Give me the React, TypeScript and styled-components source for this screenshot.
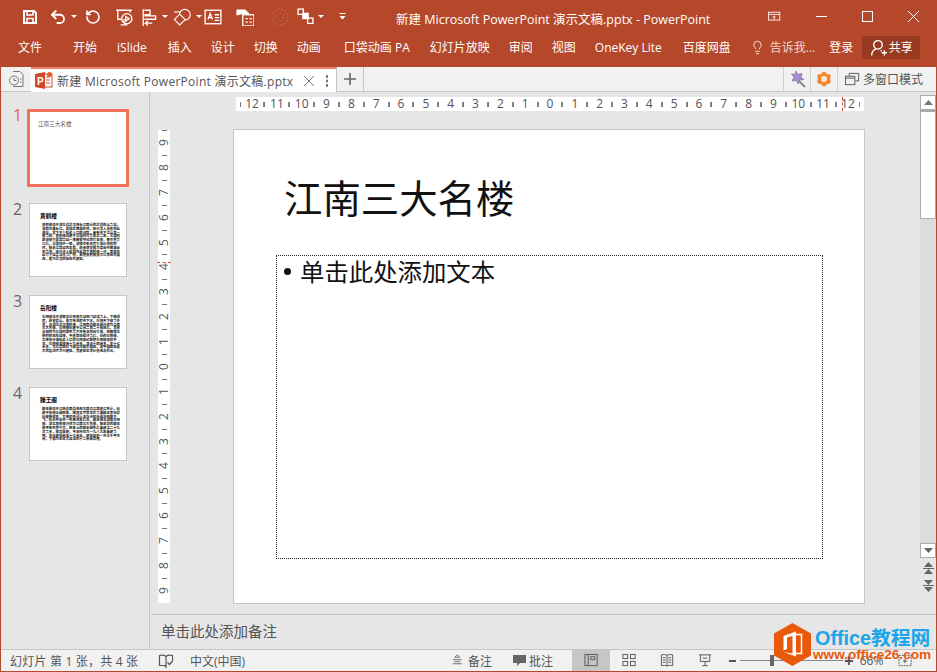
import React from 'react'
import styled, { createGlobalStyle } from 'styled-components'
import { Lightbulb, Undo2, RotateCcw } from 'lucide-react'

const RED = '#b5472a'
const UI_FONT = '"Open Sans", "Noto Sans CJK SC", sans-serif'

const GlobalStyle = createGlobalStyle`
  html, body { margin: 0; padding: 0; background: #e6e6e6; overflow: hidden; }
  * { box-sizing: border-box; }
`

const Win = styled.div`
  position: relative;
  width: 937px;
  height: 672px;
  display: flex;
  flex-direction: column;
  border: 1px solid ${RED};
  border-top: 0;
  background: #e6e6e6;
  font-family: ${UI_FONT};
  font-size: 12px;
  color: #555;
  overflow: hidden;
`
const TitleBar = styled.div`
  height: 33px;
  flex-shrink: 0;
  display: flex;
  align-items: center;
  background: ${RED};
  color: #fff;
`
const QuickBar = styled.div`
  width: 395px;
  flex-shrink: 0;
  display: flex;
  align-items: center;
  padding-left: 19px;
`
const QuickIcon = styled.span<{ $l?: number }>`
  width: 20px;
  height: 33px;
  margin-left: ${p => p.$l ?? 0}px;
  flex-shrink: 0;
  display: flex;
  align-items: center;
  justify-content: center;
`
const Caret = styled.span<{ $l: number }>`
  width: 6px;
  height: 0;
  margin-left: ${p => p.$l}px;
  border: 3px solid transparent;
  border-top: 3px solid #fff;
  border-bottom: 0;
  flex-shrink: 0;
`
const Title = styled.div`
  font-size: 12.5px;
  white-space: nowrap;
  padding-top: 4px;
`
const WinControls = styled.div`
  margin-left: auto;
  display: flex;
`
const WinButton = styled.span`
  width: 46px;
  height: 33px;
  display: flex;
  align-items: center;
  justify-content: center;
`
const Ribbon = styled.div`
  height: 34px;
  flex-shrink: 0;
  display: flex;
  align-items: center;
  gap: 19px;
  padding: 0 16px 6px 17px;
  background: ${RED};
  color: #fff;
  white-space: nowrap;
`
const RibbonTab = styled.span<{ $l?: number }>`
  margin-left: ${p => p.$l ?? 0}px;
`
const TellMe = styled.span`
  display: flex;
  align-items: center;
  gap: 5px;
  color: #f2d9d1;
`
const ShareButton = styled.span`
  margin-left: -10px;
  width: 58px;
  height: 23px;
  display: flex;
  align-items: center;
  justify-content: center;
  gap: 2px;
  background: #983a20;
`
const TabStrip = styled.div`
  height: 25px;
  flex-shrink: 0;
  display: flex;
  align-items: stretch;
  background: #f1f1f1;
  border-bottom: 1px solid #c6c6c6;
`
const HistoryBox = styled.span`
  width: 30px;
  display: flex;
  align-items: center;
  justify-content: center;
`
const DocTab = styled.div`
  width: 306px;
  height: 25px;
  display: flex;
  align-items: center;
  padding-left: 4px;
  background: #fff;
  border-top: 2px solid #f0826b;
  border-right: 1px solid #c6c6c6;
  white-space: nowrap;
  color: #555;
`
const DocName = styled.span`
  margin-left: 4px;
  width: 241px;
  font-size: 12px;
  letter-spacing: .28px;
`
const CloseGlyph = styled.span`
  width: 22px;
  display: flex;
  justify-content: center;
`
const Dots = styled.span`
  width: 4px;
  height: 12px;
  margin-left: 5px;
  background: radial-gradient(circle, #666 1px, transparent 1.2px) center / 4px 4.5px repeat-y;
`
const NewTab = styled.span`
  width: 27px;
  display: flex;
  align-items: center;
  justify-content: center;
  border-right: 1px solid #c6c6c6;
`
const StripRight = styled.div`
  margin-left: auto;
  display: flex;
`
const StripCell = styled.span<{ $w: number }>`
  width: ${p => p.$w}px;
  display: flex;
  align-items: center;
  justify-content: center;
  border-left: 1px solid #d0d0d0;
  white-space: nowrap;
`
const WindowModeCell = styled(StripCell)`
  justify-content: flex-start;
  gap: 3px;
  padding-left: 7px;
`
const Body = styled.div`
  flex: 1;
  min-height: 0;
  display: flex;
`
const ThumbPanel = styled.aside`
  width: 149px;
  flex-shrink: 0;
  display: flex;
  flex-direction: column;
  gap: 18px;
  padding: 17px 0 0 12px;
  border-right: 1px solid #c6c6c6;
`
const ThumbRow = styled.div<{ $active?: boolean }>`
  display: flex;
  gap: ${p => (p.$active ? 6 : 8)}px;
  height: ${p => (p.$active ? 78 : 74)}px;
  margin-bottom: ${p => (p.$active ? -2 : 0)}px;
`
const ThumbNum = styled.span<{ $active?: boolean }>`
  width: 8px;
  font-size: 16px;
  line-height: 12px;
  color: ${p => (p.$active ? '#e0664d' : '#666')};
`
const Thumb = styled.div<{ $active?: boolean }>`
  width: ${p => (p.$active ? 102 : 98)}px;
  height: 100%;
  padding: ${p => (p.$active ? '8px 0 0 8px' : '8px 8px 0 10px')};
  background: #fff;
  border: ${p => (p.$active ? '3px solid #f2735a' : '1px solid #c6c6c6')};
  overflow: hidden;
`
const ThumbCover = styled.div`
  font-size: 5.6px;
  line-height: 8px;
  color: #555;
`
const ThumbTitle = styled.div`
  font-size: 5.7px;
  line-height: 8px;
  font-weight: 700;
  color: #000;
`
const ThumbText = styled.p`
  margin: 3px 0 0;
  padding-left: 2px;
  width: 80px;
  font-size: 3.4px;
  line-height: 3.8px;
  font-weight: 700;
  color: #111;
`
const Workspace = styled.main`
  flex: 1;
  min-width: 0;
  display: flex;
  flex-direction: column;
`
const EditRow = styled.div`
  flex: 1;
  min-height: 0;
  display: flex;
`
const Canvas = styled.div`
  width: 770px;
  flex-shrink: 0;
`
const HRuler = styled.div`
  position: relative;
  width: 628px;
  height: 14px;
  margin: 5px 0 0 86px;
  display: flex;
  justify-content: center;
  background: #fff;
`
const HCell = styled.span`
  width: 24.83px;
  flex-shrink: 0;
  text-align: center;
  font-size: 12px;
  line-height: 14px;
  color: #555;
  background:
    linear-gradient(#777, #777) left center / 1px 5px no-repeat,
    linear-gradient(#888, #888) right center / 1px 5px no-repeat;
`
const HMark = styled.i`
  position: absolute;
  left: 606px;
  top: 0;
  height: 14px;
  border-left: 1px dashed #d9503a;
`
const SlideRow = styled.div`
  display: flex;
  align-items: flex-start;
  gap: 63px;
  margin: 19px 0 0 8px;
`
const VRuler = styled.div`
  position: relative;
  width: 12px;
  height: 473px;
  display: flex;
  flex-direction: column;
  background: #fff;
`
const VCell = styled.span`
  height: 24.89px;
  flex-shrink: 0;
  display: flex;
  align-items: center;
  justify-content: center;
  font-size: 12px;
  color: #555;
  background: linear-gradient(#777, #777) center top / 5px 1px no-repeat;
`
const VDigit = styled.span`
  writing-mode: vertical-rl;
  transform: rotate(180deg);
  line-height: 12px;
`
const VMark = styled.i`
  position: absolute;
  left: -1px;
  top: 132px;
  width: 14px;
  border-top: 1px dashed #d9503a;
`
const Slide = styled.section`
  width: 632px;
  height: 475px;
  margin-top: -1px;
  display: flex;
  flex-direction: column;
  background: #fff;
  border: 1px solid #c6c6c6;
`
const SlideTitle = styled.h1`
  margin: 43px 0 0 50px;
  font-size: 38.4px;
  font-weight: 400;
  line-height: 50px;
  color: #111;
`
const Placeholder = styled.div`
  margin: 32px 0 0 42px;
  width: 547px;
  height: 304px;
  display: flex;
  align-items: flex-start;
  gap: 9px;
  padding: 0 0 0 7px;
  border: 1px dotted #222;
  font-size: 24.4px;
  line-height: 31px;
  color: #111;
`
const Bullet = styled.span`
  width: 7px;
  height: 7px;
  margin-top: 12px;
  border-radius: 50%;
  background: #111;
  flex-shrink: 0;
`
const ScrollBar = styled.div`
  width: 16px;
  flex-shrink: 0;
  display: flex;
  flex-direction: column;
  margin-top: 3px;
`
const ScrollBtn = styled.span`
  height: 15px;
  flex-shrink: 0;
  display: flex;
  align-items: center;
  justify-content: center;
  background: #fff;
  border: 1px solid #ababab;
`
const ScrollThumb = styled.span`
  height: 109px;
  flex-shrink: 0;
  background: #fff;
  border: 1px solid #ababab;
  border-top-width: 2px;
`
const ScrollTrack = styled.span`
  flex: 1;
  background: #dcdcdc;
`
const PageBtn = styled.span`
  height: 18px;
  flex-shrink: 0;
  display: flex;
  align-items: center;
  justify-content: center;
`
const ScrollFoot = styled.div`
  height: 56px;
  padding-top: 1px;
  flex-shrink: 0;
`
const Notes = styled.div`
  height: 35px;
  flex-shrink: 0;
  margin-left: 2px;
  padding: 0 0 3px 9px;
  display: flex;
  align-items: center;
  border-top: 1px solid #c6c6c6;
  font-size: 14.5px;
  color: #555;
`
const StatusBar = styled.footer`
  height: 22px;
  flex-shrink: 0;
  display: flex;
  align-items: center;
  padding-left: 9px;
  background: #f1f1f1;
  border-top: 1px solid #c6c6c6;
  color: #555;
  white-space: nowrap;
`
const StatusText = styled.span<{ $w: number }>`
  width: ${p => p.$w}px;
  flex-shrink: 0;
  display: flex;
  align-items: center;
  gap: 3px;
`
const SlideCount = styled(StatusText)`
  letter-spacing: .2px;
`
const ViewBtn = styled.span<{ $active?: boolean }>`
  width: 38px;
  height: 21px;
  flex-shrink: 0;
  display: flex;
  align-items: center;
  justify-content: center;
  background: ${p => (p.$active ? '#c6c6c6' : 'transparent')};
`
const ZoomMinus = styled.span`
  width: 7px;
  height: 2px;
  margin-left: 5px;
  background: #555;
`
const ZoomTrack = styled.span`
  width: 103px;
  margin: 0 0 0 4px;
  height: 1px;
  display: flex;
  align-items: center;
  background: #888;
`
const ZoomKnob = styled.i`
  width: 4px;
  height: 11px;
  margin-left: 30px;
  background: #666;
`
const ZoomPlus = styled.span`
  margin-left: 1px;
  font-size: 17px;
  font-weight: 700;
  line-height: 14px;
  color: #555;
`
const ZoomValue = styled.span`
  margin-left: 6px;
  width: 38px;
`
const Watermark = styled.div`
  position: absolute;
  left: 772px;
  top: 622px;
  display: flex;
  gap: 3px;
`
const MarkText = styled.div`
  display: flex;
  flex-direction: column;
  font-family: "Liberation Sans", "Noto Sans CJK SC", sans-serif;
  font-weight: 700;
`
const MarkName = styled.span`
  margin-top: 4px;
  font-size: 19.8px;
  line-height: 24px;
  color: #1ca5e8;
  white-space: nowrap;
`
const MarkUrl = styled.span`
  margin: -3px 0 0 -2px;
  font-size: 13.6px;
  line-height: 16px;
  color: #e8590c;
  white-space: nowrap;
`

const Ico = ({ s = 16, sw = 1.2, children }: { s?: number; sw?: number; children: React.ReactNode }) => (
  <svg width={s} height={s} viewBox="0 0 16 16" fill="none" stroke="currentColor" strokeWidth={sw}>
    {children}
  </svg>
)

const SaveIcon = () => (
  <Ico sw={2}>
    <path d="M2 2h10l2 2v10H2z" />
    <path d="M5 2v4h6V2M5 14V9.500h6V14" strokeWidth={1.6} />
  </Ico>
)
const PresentIcon = () => (
  <Ico s={18}>
    <path d="M1 2h14M2.500 2v8h3M13.500 2v2M8 10v3M5 15h6" />
    <circle cx="10.500" cy="9.500" r="4.500" />
    <path d="M9.500 7.500l3 2-3 2z" />
  </Ico>
)
const AlignIcon = () => (
  <Ico s={18}>
    <path d="M2 1v15" />
    <path d="M3 2h5v4H3M3 7h10v3H3" />
    <path d="M10 13.500H4l2-2M4 13.500l2 2" />
  </Ico>
)
const ShapeIcon = () => (
  <Ico s={18} sw={1}>
    <path d="M1 3.500h6" />
    <circle cx="10.500" cy="6" r="4.800" />
    <path d="M6 5.500l4.800 4.800L6 15.100 1.200 10.300z" fill={RED} />
  </Ico>
)
const TextBoxIcon = () => (
  <Ico s={18}>
    <rect x="1" y="2" width="14" height="12" />
    <path d="M3.500 10l2-5 2 5M4.300 8.500h2.400M9.500 6h4M9.500 8.500h4M9.500 11h4" />
  </Ico>
)
const LayoutIcon = () => (
  <Ico s={18}>
    <path d="M1 2h7l3 3H5L1 6z" fill="currentColor" />
    <rect x="6" y="6" width="10" height="10" />
    <path d="M8.500 9.500h2M12 9.500h2M8.500 12.500h2M12 12.500h2" />
  </Ico>
)
const DimCircle = () => (
  <svg width="18" height="18" viewBox="0 0 18 18" fill="none" stroke="#c86a50" strokeWidth="1" strokeDasharray="2 1.500">
    <circle cx="9" cy="9" r="8" />
    <circle cx="9" cy="9" r="4" />
  </svg>
)
const ArrangeIcon = () => (
  <Ico s={17}>
    <rect x="1" y="1" width="5" height="5" />
    <rect x="5.500" y="5" width="5" height="5" fill="currentColor" />
    <rect x="10" y="9.500" width="5" height="5" />
  </Ico>
)
const CustomizeIcon = () => (
  <svg width="9" height="9" viewBox="0 0 9 9" fill="#fff">
    <rect x="1.500" y="1" width="6" height="1" />
    <path d="M1.500 4h6l-3 3.500z" />
  </svg>
)
const RibbonOptions = () => (
  <Ico s={14} sw={1}>
    <rect x="0.500" y="2.500" width="13" height="9" />
    <path d="M0.500 5h13M7 11V7M5.200 8.500L7 6.800l1.800 1.700" />
  </Ico>
)
const UserAdd = () => (
  <Ico s={17} sw={1.3}>
    <circle cx="7.500" cy="5.500" r="4" />
    <path d="M1.500 15.500c.3-3 2-5.500 4-6M10 10.500l1 1M11 13h5M13.500 10.500v5" />
  </Ico>
)
const HistoryIcon = () => (
  <svg width="16" height="18" viewBox="0 0 16 18" fill="none" stroke="#777" strokeWidth="1">
    <path d="M5 1.500h7l3 3v12H5" />
    <circle cx="6" cy="10.500" r="4.500" fill="#f1f1f1" />
    <path d="M6 8v2.500h2.500M12 9h1.500M12 12h1.500" />
  </svg>
)
const PptIcon = () => (
  <svg width="18" height="17" viewBox="0 0 18 17">
    <rect x="6" y="2" width="11" height="13" fill="#fff" stroke="#d2492a" />
    <path d="M11 5h4M11 8h4M11 11h4" stroke="#d2492a" />
    <circle cx="14.500" cy="2.500" r="2.500" fill="#ef5a2f" />
    <path d="M0 2l10-2v17L0 15z" fill="#d2492a" />
    <text x="2" y="12.500" fontSize="10" fontWeight="700" fill="#fff" fontFamily="Liberation Sans">P</text>
  </svg>
)
const WandIcon = () => (
  <svg width="18" height="18" viewBox="0 0 18 18">
    <path d="M8 1l1.500 3.500L14 3.500l-1 4 3 2-4.500.5-1.200 4-2-3.500L4 11l2-3.800L3.500 4l3.500.5z" fill="#a98bd8" stroke="#86789f" strokeWidth=".8" />
    <path d="M11 11l6 6" stroke="#8a8a8a" strokeWidth="2" />
  </svg>
)
const FlowerIcon = () => (
  <svg width="16" height="16" viewBox="0 0 16 16" fill="#f0882e">
    <circle cx="8" cy="3.400" r="2.700" />
    <circle cx="8" cy="12.600" r="2.700" />
    <circle cx="4" cy="5.700" r="2.700" />
    <circle cx="12" cy="5.700" r="2.700" />
    <circle cx="4" cy="10.300" r="2.700" />
    <circle cx="12" cy="10.300" r="2.700" />
    <circle cx="8" cy="8" r="3" fill="#fde6cf" />
  </svg>
)
const WindowsIcon = () => (
  <Ico s={15} sw={1}>
    <path d="M4.500 4V1.500h10v8H11" />
    <rect x="0.500" y="4.500" width="10" height="9" />
    <path d="M0.500 6.500h10" />
  </Ico>
)
const BookIcon = () => (
  <Ico>
    <path d="M8 3.500C6.500 2 4 2 1.500 2.500v10h5L8 14V3.500zM8 3.500C9.500 2 12 2 14.500 2.500V7" />
    <path d="M9.500 9.500l2 2 3.500-4" />
  </Ico>
)
const NotesIcon = () => (
  <Ico s={13} sw={1}>
    <path d="M6.500 1l3 3h-6zM1 7h11M3 9.500h7M1 12h11" />
  </Ico>
)
const CommentIcon = () => (
  <svg width="13" height="13" viewBox="0 0 13 13" fill="#666">
    <path d="M0 1h13v8H7l-3 3V9H0z" />
  </svg>
)
const NormalView = () => (
  <Ico s={15} sw={1}>
    <rect x="1" y="1.500" width="13" height="12" />
    <path d="M4.500 1.500v12M7 4h4.500v3H7z" />
  </Ico>
)
const SorterView = () => (
  <Ico s={15} sw={1}>
    <rect x="1" y="1.500" width="5" height="4.500" />
    <rect x="9" y="1.500" width="5" height="4.500" />
    <rect x="1" y="9" width="5" height="4.500" />
    <rect x="9" y="9" width="5" height="4.500" />
  </Ico>
)
const ReadingView = () => (
  <Ico s={15} sw={1}>
    <path d="M1.500 2c2.500-.5 4.500-.5 6 .5 1.500-1 3.500-1 6-.5v11.500c-2.500-.5-4.500-.5-6 .5-1.500-1-3.500-1-6-.5zM7.500 2.500v11.500M3 5h3M3 7.500h3M3 10h3M9 5h3M9 7.500h3M9 10h3" />
  </Ico>
)
const ShowView = () => (
  <Ico s={15} sw={1}>
    <path d="M1 2h13M2.500 2v7h10V2M7.500 9v4M4.500 13.500h6M5 5.500h5" />
  </Ico>
)
const FitIcon = () => (
  <Ico s={15} sw={1}>
    <rect x="1" y="2.500" width="13" height="11" strokeDasharray="2 1" />
    <path d="M7.500 6v5M5 8.500h5" />
  </Ico>
)
const TriUp = ({ c = '#777' }: { c?: string }) => (
  <svg width="9" height="5" viewBox="0 0 9 5"><path d="M4.500 0L9 5H0z" fill={c} /></svg>
)
const TriDown = ({ c = '#666' }: { c?: string }) => (
  <svg width="9" height="5" viewBox="0 0 9 5"><path d="M0 0h9L4.500 5z" fill={c} /></svg>
)
const DoubleUp = () => (
  <svg width="11" height="12" viewBox="0 0 11 12" fill="#666"><path d="M5.500 0L10 5H1zM0 6h11v1H0zM5.500 7L10 12H1z" /></svg>
)
const DoubleDown = () => (
  <svg width="11" height="12" viewBox="0 0 11 12" fill="#666"><path d="M1 0h9L5.500 5zM0 5h11v1H0zM1 7h9l-4.500 5z" /></svg>
)
const OfficeHex = () => (
  <svg width="39" height="45" viewBox="0 0 39 45">
    <path d="M19.500 1L38 11.500v22L19.500 44 1 33.500v-22z" fill="#e8590c" />
    <path d="M10.500 14l12.500-4.500v25l-12.500-4.500 9 1.500V14l-5.500 1.500V27l-3.500 1.500z" fill="#fff" />
    <path d="M23 12.500h5.500v19H23" fill="none" stroke="#fff" strokeWidth="1.500" />
  </svg>
)

const tabs: [string, number][] = [
  ['开始', 0], ['iSlide', 1], ['插入', 2], ['设计', 0], ['切换', 0], ['动画', 0], ['口袋动画 PA', 4],
  ['幻灯片放映', 1], ['审阅', 0], ['视图', 0], ['OneKey Lite', 0], ['百度网盘', 2],
]

const slides = [
  {
    title: '黄鹤楼',
    text: '黄鹤楼位于湖北省武汉市长江南岸的武昌蛇山之巅，濒临万里长江，是国家旅游胜地，历代文人墨客到此游览，留下不少脍炙人口的诗篇，享有天下江山第一楼之称。黄鹤楼始建于三国时代吴黄武二年，三国时期该楼只是夏口城一角瞭望守戍的军事楼，晋灭东吴以后，三国归于一统，该楼在失去其军事价值的同时，随着江夏城的发展，逐步演变成为官商行旅游必到之地。唐代诗人崔颢在此题下黄鹤楼一诗，李白在此写下送孟浩然之广陵，更使黄鹤楼自古以来闻名遐迩，成为武汉的标志性建筑。',
  },
  {
    title: '岳阳楼',
    text: '岳阳楼位于湖南省岳阳市古城西门城墙之上，下瞰洞庭，前望君山，自古有洞庭天下水，岳阳天下楼之美誉，与湖北武汉黄鹤楼、江西南昌滕王阁并称为江南三大名楼。岳阳楼始建于公元二百二十年前后，其前身相传为三国时期东吴大将鲁肃的阅军楼，西晋南北朝时称巴陵城楼，中唐李白赋诗之后，始称岳阳楼。北宋范仲淹脍炙人口的岳阳楼记更使岳阳楼著称于世。岳阳楼主楼高十九米多，进深十四米多，宽十七米多，为三层四柱飞檐盔顶纯木结构，是中国现存最大的盔顶式古代建筑，其建筑艺术价值无与伦比。',
  },
  {
    title: '滕王阁',
    text: '滕王阁位于江西省南昌市西北部沿江路赣江东岸，始建于唐朝永徽四年，因唐太宗李世民之弟滕王李元婴始建而得名，又因初唐诗人王勃诗句落霞与孤鹜齐飞，秋水共长天一色而流芳后世。滕王阁与湖南岳阳楼、湖北黄鹤楼并称为江南三大名楼，因王勃的滕王阁序而名传千古。历史上的滕王阁先后重建达二十九次之多，屡毁屡建，今日所见为一九八九年重建之物，主体建筑高五十七米半，建筑面积一万三千平方米，下部为象征古城墙的十二米高台座。',
  },
]

const hNums = [12, 11, 10, 9, 8, 7, 6, 5, 4, 3, 2, 1, 0, 1, 2, 3, 4, 5, 6, 7, 8, 9, 10, 11, 12]
const vNums = [9, 8, 7, 6, 5, 4, 3, 2, 1, 0, 1, 2, 3, 4, 5, 6, 7, 8, 9]

export default function App() {
  return (
    <Win>
      <GlobalStyle />
      <TitleBar>
        <QuickBar>
          <QuickIcon><SaveIcon /></QuickIcon>
          <QuickIcon $l={8}><Undo2 size={18} strokeWidth={2.4} /></QuickIcon>
          <Caret $l={3} />
          <QuickIcon $l={6}><RotateCcw size={16} strokeWidth={2.4} /></QuickIcon>
          <QuickIcon $l={11}><PresentIcon /></QuickIcon>
          <QuickIcon $l={6}><AlignIcon /></QuickIcon>
          <Caret $l={2} />
          <QuickIcon $l={4}><ShapeIcon /></QuickIcon>
          <Caret $l={4} />
          <QuickIcon $l={1}><TextBoxIcon /></QuickIcon>
          <QuickIcon $l={12}><LayoutIcon /></QuickIcon>
          <QuickIcon $l={15}><DimCircle /></QuickIcon>
          <QuickIcon $l={5}><ArrangeIcon /></QuickIcon>
          <Caret $l={3} />
          <QuickIcon $l={8}><CustomizeIcon /></QuickIcon>
        </QuickBar>
        <Title>新建 Microsoft PowerPoint 演示文稿.pptx - PowerPoint</Title>
        <WinControls>
          <WinButton><RibbonOptions /></WinButton>
          <WinButton><svg width="11" height="11"><path d="M0 5.500h11" stroke="#fff" /></svg></WinButton>
          <WinButton><svg width="11" height="11"><rect x=".5" y=".5" width="10" height="10" fill="none" stroke="#fff" /></svg></WinButton>
          <WinButton><svg width="11" height="11"><path d="M0 0l11 11M11 0L0 11" stroke="#fff" /></svg></WinButton>
        </WinControls>
      </TitleBar>
      <Ribbon>
        <RibbonTab $l={0}>文件</RibbonTab>
        {tabs.map(([t, l], i) => <RibbonTab key={t} $l={i === 0 ? 12 : l}>{t}</RibbonTab>)}
        <TellMe><Lightbulb size={15} strokeWidth={1.3} color="#fff" />告诉我...</TellMe>
        <RibbonTab $l={-5}>登录</RibbonTab>
        <ShareButton><UserAdd />共享</ShareButton>
      </Ribbon>
      <TabStrip>
        <HistoryBox><HistoryIcon /></HistoryBox>
        <DocTab>
          <PptIcon />
          <DocName>新建 Microsoft PowerPoint 演示文稿.pptx</DocName>
          <CloseGlyph><svg width="10" height="10"><path d="M0 0l10 10M10 0L0 10" stroke="#777" /></svg></CloseGlyph>
          <Dots />
        </DocTab>
        <NewTab><svg width="12" height="12"><path d="M6 0v12M0 6h12" stroke="#666" strokeWidth="1.600" /></svg></NewTab>
        <StripRight>
          <StripCell $w={27}><WandIcon /></StripCell>
          <StripCell $w={27}><FlowerIcon /></StripCell>
          <WindowModeCell $w={99}><WindowsIcon />多窗口模式</WindowModeCell>
        </StripRight>
      </TabStrip>
      <Body>
        <ThumbPanel>
          <ThumbRow $active>
            <ThumbNum $active>1</ThumbNum>
            <Thumb $active><ThumbCover>江南三大名楼</ThumbCover></Thumb>
          </ThumbRow>
          {slides.map((s, i) => (
            <ThumbRow key={s.title}>
              <ThumbNum>{i + 2}</ThumbNum>
              <Thumb>
                <ThumbTitle>{s.title}</ThumbTitle>
                <ThumbText>{s.text}</ThumbText>
              </Thumb>
            </ThumbRow>
          ))}
        </ThumbPanel>
        <Workspace>
          <EditRow>
            <Canvas>
              <HRuler>
                {hNums.map((n, i) => <HCell key={i}>{n}</HCell>)}
                <HMark />
              </HRuler>
              <SlideRow>
                <VRuler>
                  {vNums.map((n, i) => <VCell key={i}><VDigit>{n}</VDigit></VCell>)}
                  <VMark />
                </VRuler>
                <Slide>
                  <SlideTitle>江南三大名楼</SlideTitle>
                  <Placeholder><Bullet />单击此处添加文本</Placeholder>
                </Slide>
              </SlideRow>
            </Canvas>
            <ScrollBar>
              <ScrollBtn><TriUp /></ScrollBtn>
              <ScrollThumb />
              <ScrollTrack />
              <ScrollBtn><TriDown /></ScrollBtn>
              <ScrollFoot>
                <PageBtn><DoubleUp /></PageBtn>
                <PageBtn><DoubleDown /></PageBtn>
              </ScrollFoot>
            </ScrollBar>
          </EditRow>
          <Notes>单击此处添加备注</Notes>
        </Workspace>
      </Body>
      <StatusBar>
        <SlideCount $w={148}>幻灯片 第 1 张，共 4 张</SlideCount>
        <StatusText $w={32}><BookIcon /></StatusText>
        <StatusText $w={262}>中文(中国)</StatusText>
        <StatusText $w={61}><NotesIcon />备注</StatusText>
        <StatusText $w={59}><CommentIcon />批注</StatusText>
        <ViewBtn $active><NormalView /></ViewBtn>
        <ViewBtn><SorterView /></ViewBtn>
        <ViewBtn><ReadingView /></ViewBtn>
        <ViewBtn><ShowView /></ViewBtn>
        <ZoomMinus />
        <ZoomTrack><ZoomKnob /></ZoomTrack>
        <ZoomPlus>+</ZoomPlus>
        <ZoomValue>66%</ZoomValue>
        <FitIcon />
      </StatusBar>
      <Watermark>
        <OfficeHex />
        <MarkText>
          <MarkName>Office教程网</MarkName>
          <MarkUrl>www.office26.com</MarkUrl>
        </MarkText>
      </Watermark>
    </Win>
  )
}
